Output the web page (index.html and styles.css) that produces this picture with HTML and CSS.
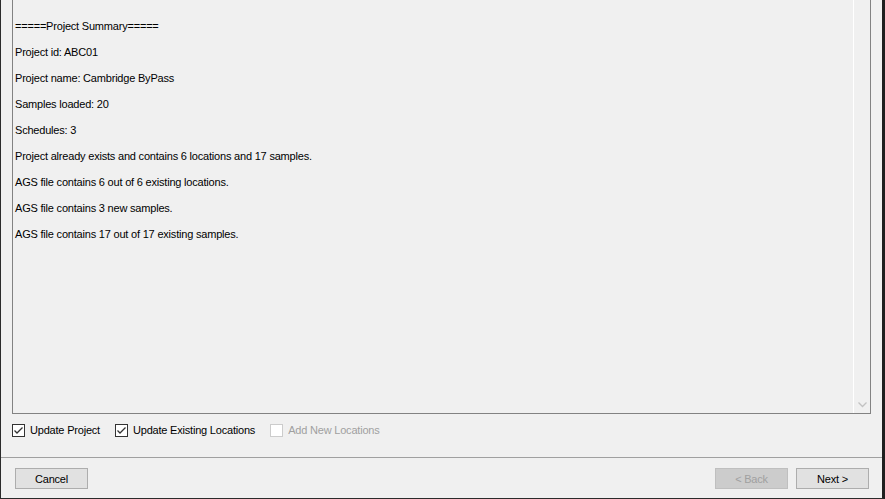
FILE: index.html
```html
<!DOCTYPE html>
<html lang="en">
<head>
    <meta charset="UTF-8">
    <title>Import AGS - Summary</title>
    <link rel="stylesheet" href="styles.css">
</head>
<body>
    <div class="wizard">
        <div class="summary">
            <div class="summary-text">
                <p>=====Project Summary=====</p>
                <p>Project id: ABC01</p>
                <p>Project name: Cambridge ByPass</p>
                <p>Samples loaded: 20</p>
                <p>Schedules: 3</p>
                <p>Project already exists and contains 6 locations and 17 samples.</p>
                <p>AGS file contains 6 out of 6 existing locations.</p>
                <p>AGS file contains 3 new samples.</p>
                <p>AGS file contains 17 out of 17 existing samples.</p>
            </div>
            <div class="scrollbar">
                <span class="scroll-arrow">
                    <svg width="9" height="6" viewBox="0 0 9 6"><path d="M0.5 0.5 L4.5 4.5 L8.5 0.5" fill="none" stroke="#c2c2c2" stroke-width="1.3"/></svg>
                </span>
            </div>
        </div>

        <div class="options">
            <label class="check">
                <span class="box checked">
                    <svg width="11" height="11" viewBox="0 0 11 11"><path d="M1.5 5.5 L4 8 L9.5 2.5" fill="none" stroke="#333" stroke-width="1.3"/></svg>
                </span>
                Update Project
            </label>
            <label class="check">
                <span class="box checked">
                    <svg width="11" height="11" viewBox="0 0 11 11"><path d="M1.5 5.5 L4 8 L9.5 2.5" fill="none" stroke="#333" stroke-width="1.3"/></svg>
                </span>
                Update Existing Locations
            </label>
            <label class="check disabled">
                <span class="box"></span>
                Add New Locations
            </label>
        </div>

        <div class="footer">
            <button class="btn">Cancel</button>
            <div class="nav">
                <button class="btn" disabled>&lt; Back</button>
                <button class="btn">Next &gt;</button>
            </div>
        </div>
    </div>
</body>
</html>
```

FILE: styles.css
```css
* {
    box-sizing: border-box;
    margin: 0;
    padding: 0;
}

body {
    background-color: #f0f0f0;
    font-family: 'Liberation Sans', Arial, sans-serif;
    font-size: 11px;
    letter-spacing: -0.2px;
    color: #000;
}

.wizard {
    height: 499px;
    display: flex;
    flex-direction: column;
    border-left: 1px solid #2b2b2b;
    border-right: 3px solid #1f1f1f;
    border-bottom: 1px solid #2b2b2b;
}

.summary {
    display: flex;
    height: 414px;
    margin: 0 11px;
    border: 1px solid #828282;
    border-top: none;
}

.summary-text {
    flex: 1;
    padding: 13px 2px 0;
}

.summary-text p {
    line-height: 26px;
}

.scrollbar {
    width: 17px;
    border-left: 1px solid #ffffff;
    display: flex;
    align-items: flex-end;
    justify-content: center;
}

.scroll-arrow {
    height: 17px;
    display: flex;
    align-items: center;
    justify-content: center;
}

.options {
    display: flex;
    align-items: center;
    gap: 15px;
    padding: 10px 0 0 11px;
}

.check {
    display: flex;
    align-items: center;
    gap: 5px;
    height: 13px;
    line-height: 13px;
}

.box {
    width: 13px;
    height: 13px;
    border: 1px solid #333;
    background-color: #fff;
    display: flex;
    align-items: center;
    justify-content: center;
}

.check.disabled {
    color: #a0a0a0;
}

.check.disabled .box {
    border-color: #cccccc;
}

.footer {
    margin-top: auto;
    height: 41px;
    border-top: 1px solid #a0a0a0;
    display: flex;
    justify-content: space-between;
    padding: 10px 13px 0 14px;
}

.nav {
    display: flex;
    gap: 8px;
}

.btn {
    width: 73px;
    height: 21px;
    background-color: #e1e1e1;
    border: 1px solid #adadad;
    font-family: 'Liberation Sans', Arial, sans-serif;
    font-size: 11px;
    letter-spacing: -0.2px;
    color: #000;
}

.btn:disabled {
    background-color: #cccccc;
    border-color: #bfbfbf;
    color: #a0a0a0;
}
```
